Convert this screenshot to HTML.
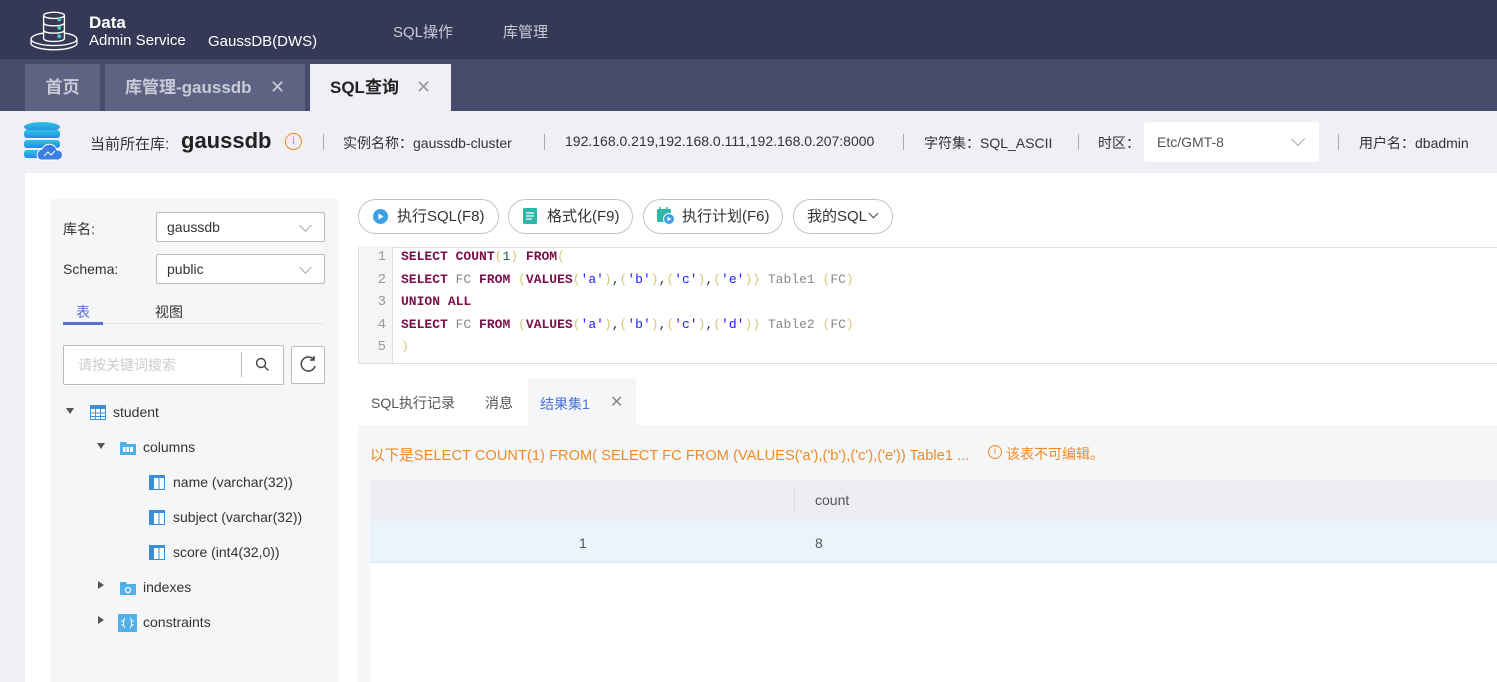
<!DOCTYPE html>
<html><head><meta charset="utf-8"><style>
*{margin:0;padding:0;box-sizing:border-box}
body{width:1497px;height:682px;overflow:hidden;background:#eef0f5;font-family:"Liberation Sans","Noto Sans CJK SC",sans-serif;font-size:14px;color:#333;position:relative}
.a{position:absolute}
.top{left:0;top:0;width:1497px;height:59px;background:#363956}
.tabbar{left:0;top:59px;width:1497px;height:52px;background:#474c6d}
.tab{top:64px;height:47px;background:#5f6383;color:#c9cbd8;font-weight:bold;font-size:17px;line-height:47px}
.info{top:111px;left:0;width:1497px;height:62px;background:#eef0f5;font-size:14px;color:#333}
.sep{width:1px;height:16px;background:#aaa;top:134px}
.main{left:25px;top:173px;width:1472px;height:509px;background:#fff}
.left{left:50px;top:199px;width:288px;height:483px;background:#f5f6f8}
.sel{background:#fff;border:1px solid #bbb;border-radius:2px;height:30px;line-height:28px;padding-left:10px;color:#333}
.chev{position:absolute;right:14px;top:8px;width:9px;height:9px;border-right:1px solid #aaa;border-bottom:1px solid #aaa;transform:rotate(45deg)}
.btn{top:199px;height:35px;border:1px solid #c3c3c3;border-radius:18px;background:#fff;line-height:33px;font-size:15px;color:#333;padding-left:38px}
.code{font-family:"Liberation Mono",monospace;font-size:13px;line-height:22.5px}
.k{color:#7b0f4b;font-weight:bold}.p{color:#d5c77a}.s{color:#1a1aff}.g{color:#888}.n{color:#116644}
.tree{font-size:14px;color:#333}
</style></head><body>
<div class="a top"></div>
<svg class="a" style="left:29px;top:10px" width="50" height="42" viewBox="0 0 48 40" fill="none" stroke="#fff" stroke-width="1.3">
<ellipse cx="24" cy="5" rx="10" ry="3"/><path d="M14 5v22c0 2 4.5 3 10 3s10-1 10-3V5"/><path d="M14 12c0 2 4.5 3 10 3s10-1 10-3M14 19c0 2 4.5 3 10 3s10-1 10-3"/>
<path d="M14 22c-7 1-12 3-12 6v4c0 3 10 6 22 6s22-3 22-6v-4c0-3-5-5-12-6"/><path d="M2 28c0 3 10 6 22 6s22-3 22-6"/>
<circle cx="29" cy="9" r="1.8" fill="#3fd3c0" stroke="none"/><circle cx="29" cy="17" r="1.8" fill="#3fd3c0" stroke="none"/><circle cx="29" cy="25" r="1.8" fill="#3fd3c0" stroke="none"/></svg>
<div class="a" style="left:89px;top:13px;color:#fff;font-size:17px;font-weight:bold">Data</div>
<div class="a" style="left:89px;top:32px;color:#fff;font-size:15px">Admin Service</div>
<div class="a" style="left:208px;top:33px;color:#fff;font-size:15px">GaussDB(DWS)</div>
<div class="a" style="left:393px;top:21px;color:#c9cbd8;font-size:15px">SQL操作</div>
<div class="a" style="left:503px;top:21px;color:#c9cbd8;font-size:15px">库管理</div>
<div class="a tabbar"></div>
<div class="a tab" style="left:25px;width:75px;text-align:center">首页</div>
<div class="a tab" style="left:105px;width:200px;padding-left:20px">库管理-gaussdb<span style="position:absolute;left:165px;font-weight:normal;font-size:18px">✕</span></div>
<div class="a tab" style="left:310px;width:141px;background:#eef0f5;color:#222;padding-left:20px">SQL查询<span style="position:absolute;left:106px;font-weight:normal;font-size:18px;color:#999">✕</span></div>
<div class="a info"></div>
<svg class="a" style="left:24px;top:122px" width="42" height="40" viewBox="0 0 42 40">
<defs><linearGradient id="db" x1="0" y1="0" x2="0" y2="1"><stop offset="0" stop-color="#2bc6e0"/><stop offset="1" stop-color="#2a86e6"/></linearGradient></defs>
<ellipse cx="18" cy="5" rx="18" ry="5" fill="url(#db)"/><rect x="0" y="8" width="36" height="8" rx="3" fill="url(#db)"/><rect x="0" y="18" width="36" height="8" rx="3" fill="url(#db)"/><rect x="0" y="28" width="36" height="8" rx="3" fill="url(#db)"/>
<path d="M16 38a6 6 0 0 1 2-11a8 8 0 0 1 15 1a5 5 0 0 1 1 10z" fill="#3b7fe6" stroke="#fff" stroke-width="1"/>
<path d="M20 34l4-4 3 3 4-4" stroke="#fff" stroke-width="1" fill="none"/></svg>
<div class="a" style="left:90px;top:133px;font-size:15px">当前所在库:</div>
<div class="a" style="left:181px;top:128px;font-size:22px;font-weight:bold;color:#222">gaussdb</div>
<div class="a" style="left:285px;top:133px;width:17px;height:17px;border:1.5px solid #f08a24;border-radius:50%;color:#f08a24;font-size:11px;text-align:center;line-height:14px">i</div>
<div class="a sep" style="left:323px"></div>
<div class="a" style="left:343px;top:133px">实例名称：gaussdb-cluster</div>
<div class="a sep" style="left:544px"></div>
<div class="a" style="left:565px;top:133px">192.168.0.219,192.168.0.111,192.168.0.207:8000</div>
<div class="a sep" style="left:903px"></div>
<div class="a" style="left:924px;top:133px">字符集：SQL_ASCII</div>
<div class="a sep" style="left:1078px"></div>
<div class="a" style="left:1098px;top:133px">时区：</div>
<div class="a" style="left:1144px;top:122px;width:175px;height:40px;background:#fff;border-radius:3px;padding-left:13px;line-height:40px;color:#555">Etc/GMT-8<span class="chev" style="top:12px;right:16px;width:10px;height:10px"></span></div>
<div class="a sep" style="left:1338px"></div>
<div class="a" style="left:1359px;top:133px">用户名：dbadmin</div>
<div class="a main"></div>
<div class="a left"></div>
<div class="a" style="left:63px;top:219px;color:#333">库名:</div>
<div class="a sel" style="left:156px;top:212px;width:169px">gaussdb<span class="chev"></span></div>
<div class="a" style="left:63px;top:261px;color:#333">Schema:</div>
<div class="a sel" style="left:156px;top:254px;width:169px">public<span class="chev"></span></div>
<div class="a" style="left:76px;top:302px;color:#5b6fd0">表</div>
<div class="a" style="left:155px;top:302px;color:#333">视图</div>
<div class="a" style="left:63px;top:323px;width:262px;height:1px;background:#e6e6e6"></div>
<div class="a" style="left:63px;top:322px;width:40px;height:3px;background:#5b6fd0"></div>
<div class="a" style="left:63px;top:345px;width:221px;height:40px;background:#fff;border:1px solid #bbb;border-radius:2px;padding-left:14px;line-height:38px;color:#ccc">请按关键词搜索</div>
<div class="a" style="left:241px;top:352px;width:1px;height:25px;background:#bbb"></div>
<svg class="a" style="left:255px;top:357px" width="15" height="15" viewBox="0 0 15 15" fill="none" stroke="#444" stroke-width="1.4"><circle cx="6" cy="6" r="4.5"/><path d="M9.5 9.5l4 4"/></svg>
<div class="a" style="left:291px;top:346px;width:34px;height:38px;background:#fff;border:1px solid #bbb;border-radius:2px"></div>
<svg class="a" style="left:298px;top:354px" width="20" height="20" viewBox="0 0 20 20" fill="none" stroke="#444" stroke-width="1.5"><path d="M16 6A7 7 0 1 0 17 12"/><path d="M16 2v4h-4"/></svg>
<div class="tree">
<div class="a" style="left:66px;top:408px;border-left:4px solid transparent;border-right:4px solid transparent;border-top:6px solid #555"></div>
<svg class="a" style="left:90px;top:405px" width="16" height="15"><rect x="0.5" y="0.5" width="15" height="14" fill="#fff" stroke="#3a8fd9"/><rect x="0" y="0" width="16" height="4" fill="#3a8fd9"/><path d="M5.5 4v11M10.5 4v11M0 8h16M0 11.5h16" stroke="#3a8fd9"/></svg>
<div class="a" style="left:113px;top:404px">student</div>
<div class="a" style="left:97px;top:443px;border-left:4px solid transparent;border-right:4px solid transparent;border-top:6px solid #555"></div>
<svg class="a" style="left:120px;top:440px" width="16" height="15"><path d="M0 2h6l1 2h9v11H0z" fill="#4fb0ea"/><rect x="3" y="7" width="10" height="5" fill="#fff"/><path d="M6 7v5M9.5 7v5" stroke="#4fb0ea"/></svg>
<div class="a" style="left:143px;top:439px">columns</div>
<svg class="a" style="left:149px;top:475px" width="16" height="15"><rect x="0.5" y="0.5" width="15" height="14" fill="#fff" stroke="#3a8fd9"/><rect x="0" y="0" width="16" height="3" fill="#3a8fd9"/><rect x="0" y="0" width="5" height="15" fill="#3a8fd9"/><path d="M10 3v12" stroke="#3a8fd9"/></svg>
<div class="a" style="left:173px;top:474px">name (varchar(32))</div>
<svg class="a" style="left:149px;top:510px" width="16" height="15"><rect x="0.5" y="0.5" width="15" height="14" fill="#fff" stroke="#3a8fd9"/><rect x="0" y="0" width="16" height="3" fill="#3a8fd9"/><rect x="0" y="0" width="5" height="15" fill="#3a8fd9"/><path d="M10 3v12" stroke="#3a8fd9"/></svg>
<div class="a" style="left:173px;top:509px">subject (varchar(32))</div>
<svg class="a" style="left:149px;top:545px" width="16" height="15"><rect x="0.5" y="0.5" width="15" height="14" fill="#fff" stroke="#3a8fd9"/><rect x="0" y="0" width="16" height="3" fill="#3a8fd9"/><rect x="0" y="0" width="5" height="15" fill="#3a8fd9"/><path d="M10 3v12" stroke="#3a8fd9"/></svg>
<div class="a" style="left:173px;top:544px">score (int4(32,0))</div>
<div class="a" style="left:98px;top:581px;border-top:4px solid transparent;border-bottom:4px solid transparent;border-left:6px solid #555"></div>
<svg class="a" style="left:120px;top:580px" width="16" height="15"><path d="M0 2h6l1 2h9v11H0z" fill="#4fb0ea"/><circle cx="8" cy="10" r="2.5" fill="none" stroke="#fff" stroke-width="1.2"/></svg>
<div class="a" style="left:143px;top:579px">indexes</div>
<div class="a" style="left:98px;top:616px;border-top:4px solid transparent;border-bottom:4px solid transparent;border-left:6px solid #555"></div>
<svg class="a" style="left:118px;top:614px" width="19" height="18"><rect width="19" height="18" fill="#4fb0ea"/><path d="M7 4c-2 2-2 8 0 10M12 4c2 2 2 8 0 10M3 7h3M3 11h3M13 7h3M13 11h3" stroke="#fff" fill="none"/></svg>
<div class="a" style="left:143px;top:614px">constraints</div>
</div>
<div class="a btn" style="left:358px;width:141px">执行SQL(F8)</div>
<svg class="a" style="left:373px;top:209px" width="15" height="15"><circle cx="7.5" cy="7.5" r="7.5" fill="#3aa0e8"/><path d="M5.5 4.5v6l5-3z" fill="#fff"/></svg>
<div class="a btn" style="left:508px;width:125px">格式化(F9)</div>
<svg class="a" style="left:523px;top:208px" width="14" height="16"><rect width="14" height="16" rx="1.5" fill="#2fb8a8"/><path d="M3 5h8M3 8h8M3 11h6" stroke="#fff" stroke-width="1.3"/></svg>
<div class="a btn" style="left:643px;width:140px">执行计划(F6)</div>
<svg class="a" style="left:657px;top:207px" width="18" height="18"><rect x="0" y="2" width="14" height="13" rx="1.5" fill="#2fb8a8"/><path d="M3 0v4M10 0v4" stroke="#2fb8a8" stroke-width="1.5"/><circle cx="12" cy="12" r="5.5" fill="#3aa0e8" stroke="#fff"/><path d="M10.5 9.5v5l4-2.5z" fill="#fff"/></svg>
<div class="a btn" style="left:793px;width:100px;padding-left:13px">我的SQL<span style="display:inline-block;width:7px;height:7px;border-right:1.3px solid #444;border-bottom:1.3px solid #444;transform:rotate(45deg);margin-left:3px;position:relative;top:-4px"></span></div>
<div class="a" style="left:358px;top:247px;width:1139px;height:117px;border:1px solid #ddd;border-right:none;background:#fff"></div>
<div class="a code" style="left:359px;top:246px;width:34px;height:117px;background:#f5f5f5;border-right:1px solid #ddd;color:#999;text-align:right;padding-right:6px;font-size:14px">
<div>1</div><div>2</div><div>3</div><div>4</div><div>5</div></div>
<div class="a code" style="left:401px;top:246px;white-space:pre"><div><span class="k">SELECT</span> <span class="k">COUNT</span><span class="p">(</span><span class="n">1</span><span class="p">)</span> <span class="k">FROM</span><span class="p">(</span></div><div><span class="k">SELECT</span> <span class="g">FC</span> <span class="k">FROM</span> <span class="p">(</span><span class="k">VALUES</span><span class="p">(</span><span class="s">'a'</span><span class="p">)</span>,<span class="p">(</span><span class="s">'b'</span><span class="p">)</span>,<span class="p">(</span><span class="s">'c'</span><span class="p">)</span>,<span class="p">(</span><span class="s">'e'</span><span class="p">))</span> <span class="g">Table1</span> <span class="p">(</span><span class="g">FC</span><span class="p">)</span></div><div><span class="k">UNION</span> <span class="k">ALL</span></div><div><span class="k">SELECT</span> <span class="g">FC</span> <span class="k">FROM</span> <span class="p">(</span><span class="k">VALUES</span><span class="p">(</span><span class="s">'a'</span><span class="p">)</span>,<span class="p">(</span><span class="s">'b'</span><span class="p">)</span>,<span class="p">(</span><span class="s">'c'</span><span class="p">)</span>,<span class="p">(</span><span class="s">'d'</span><span class="p">))</span> <span class="g">Table2</span> <span class="p">(</span><span class="g">FC</span><span class="p">)</span></div><div><span class="p">)</span></div></div>
<div class="a" style="left:371px;top:393px;color:#555">SQL执行记录</div>
<div class="a" style="left:485px;top:393px;color:#555">消息</div>
<div class="a" style="left:528px;top:378px;width:108px;height:48px;background:#f5f6f8"></div>
<div class="a" style="left:540px;top:394px;color:#4a72d8">结果集1</div>
<div class="a" style="left:610px;top:392px;color:#888;font-size:16px">✕</div>
<div class="a" style="left:358px;top:425px;width:1139px;height:257px;background:#f5f6f8"></div>
<div class="a" style="left:370px;top:444px;color:#f08a24;font-size:14.6px;letter-spacing:0.05px">以下是SELECT COUNT(1) FROM( SELECT FC FROM (VALUES('a'),('b'),('c'),('e')) Table1 ...</div>
<div class="a" style="left:988px;top:445px;width:14px;height:14px;border:1.2px solid #f08a24;border-radius:50%;color:#f08a24;font-size:10px;text-align:center;line-height:12px">i</div>
<div class="a" style="left:1006px;top:444px;color:#f08a24">该表不可编辑。</div>
<div class="a" style="left:370px;top:480px;width:1127px;height:202px;background:#fff"></div>
<div class="a" style="left:370px;top:480px;width:1127px;height:41px;background:#ebedf1"></div>
<div class="a" style="left:794px;top:489px;width:1px;height:24px;background:#d8d8d8"></div>
<div class="a" style="left:815px;top:492px;color:#555">count</div>
<div class="a" style="left:370px;top:521px;width:1127px;height:42px;background:#eaf5fb;border-bottom:1px solid #e0e8ee"></div>
<div class="a" style="left:579px;top:535px;color:#555">1</div>
<div class="a" style="left:815px;top:535px;color:#555">8</div>
</body></html>
